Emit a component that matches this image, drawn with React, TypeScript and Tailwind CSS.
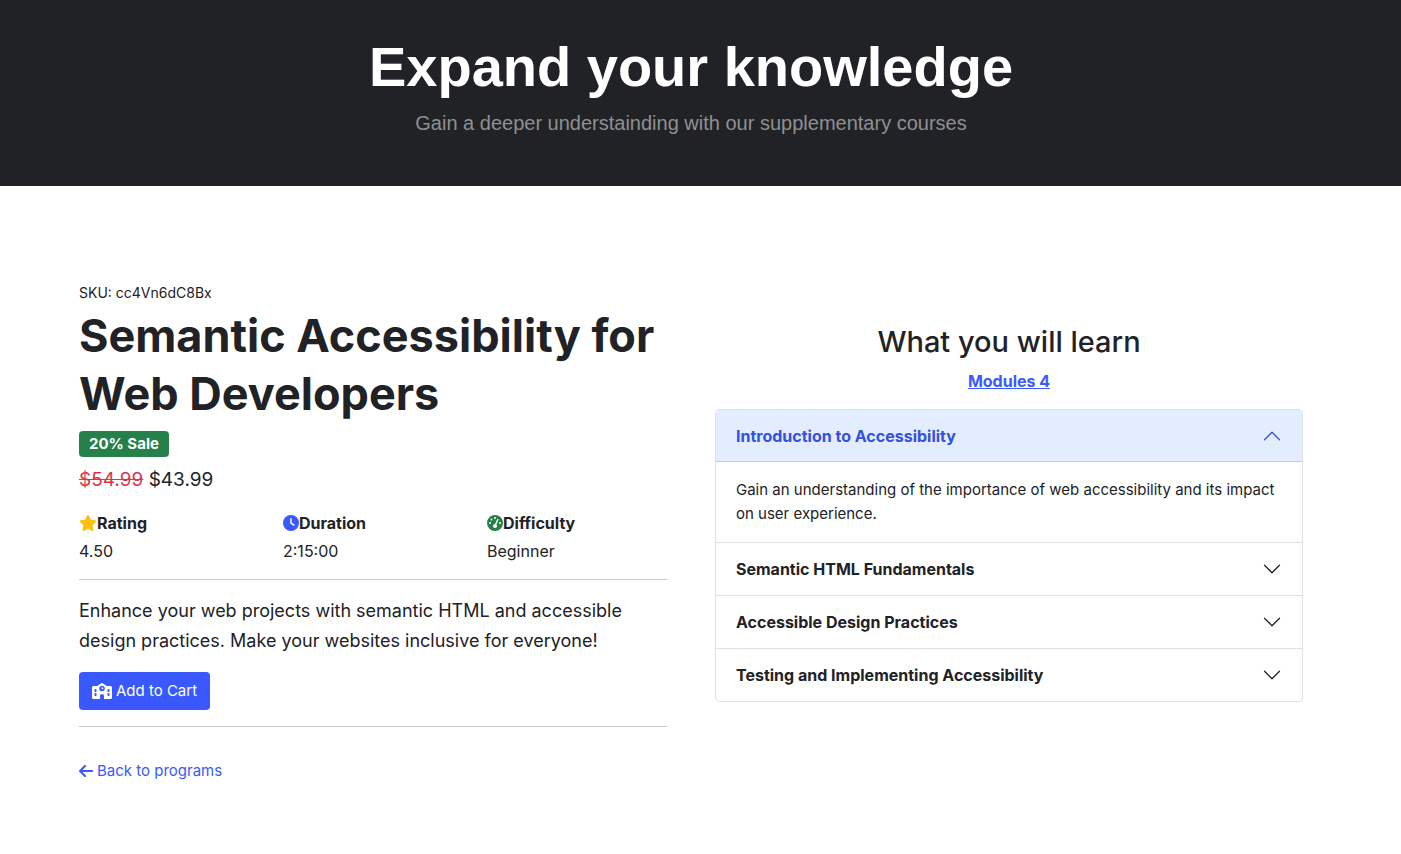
import { useState } from "react";
import { FaArrowLeft, FaClock, FaGaugeHigh, FaSchool, FaStar } from "react-icons/fa6";

const modules = [
  {
    title: "Introduction to Accessibility",
    body: "Gain an understanding of the importance of web accessibility and its impact on user experience.",
  },
  {
    title: "Semantic HTML Fundamentals",
    body: "Learn how to structure pages with meaningful HTML elements.",
  },
  {
    title: "Accessible Design Practices",
    body: "Apply inclusive design principles to layout, colour and interaction.",
  },
  {
    title: "Testing and Implementing Accessibility",
    body: "Test your pages and bring accessibility into your workflow.",
  },
];

const facts = [
  { label: "Rating", value: "4.50", icon: <FaStar className="h-4 w-[18px] text-[#fdbe15]" /> },
  { label: "Duration", value: "2:15:00", icon: <FaClock className="size-4 text-[#3959ff]" /> },
  { label: "Difficulty", value: "Beginner", icon: <FaGaugeHigh className="size-4 text-[#26804a]" /> },
];

function Chevron({ open }: { open: boolean }) {
  return (
    <svg viewBox="0 0 16 16" fill="currentColor" className={open ? "size-5 rotate-180" : "size-5"} aria-hidden="true">
      <path
        fillRule="evenodd"
        d="M1.646 4.646a.5.5 0 0 1 .708 0L8 10.293l5.646-5.647a.5.5 0 0 1 .708.708l-6 6a.5.5 0 0 1-.708 0l-6-6a.5.5 0 0 1 0-.708z"
      />
    </svg>
  );
}

function Accordion() {
  const [active, setActive] = useState(0);
  return (
    <div className="divide-y divide-[#dee2e6] overflow-hidden rounded border border-[#dee2e6]">
      {modules.map((module, index) => {
        const open = index === active;
        return (
          <div key={module.title}>
            <h3>
              <button
                type="button"
                aria-expanded={open}
                aria-controls={`module-${index}`}
                onClick={() => setActive(open ? -1 : index)}
                className={
                  open
                    ? "flex w-full items-center justify-between bg-[#e3edff] px-5 py-[14px] text-left font-bold text-[#3350e0] shadow-[inset_0_-1px_0_#c4cee0]"
                    : "flex w-full items-center justify-between px-5 py-[14px] text-left font-bold"
                }
              >
                {module.title}
                <Chevron open={open} />
              </button>
            </h3>
            {open && (
              <p id={`module-${index}`} className="px-5 py-4 text-[15px] leading-6">
                {module.body}
              </p>
            )}
          </div>
        );
      })}
    </div>
  );
}

export default function App() {
  return (
    <div className="min-h-screen bg-white font-['Inter',sans-serif] text-base text-[#212226]">
      <header className="bg-[#212226] pt-8 pr-[19px] pb-[46px] text-center font-['Liberation_Sans',Arial,sans-serif]">
        <h1 className="text-[56px] leading-[70px] font-bold text-white">Expand your knowledge</h1>
        <p className="mt-1 text-xl leading-[34px] text-[#8f9092]">
          Gain a deeper understainding with our supplementary courses
        </p>
      </header>

      <main className="pt-24 pr-[19px] pb-12">
        <div className="mx-auto max-w-[1224px]">
          <div className="grid grid-cols-2 items-center gap-12">
            <section>
              <p className="text-sm leading-[21px]">SKU: cc4Vn6dC8Bx</p>
              <h2 className="mt-1 text-[45px] leading-[58px] font-bold">Semantic Accessibility for Web Developers</h2>
              <div className="mt-2 flex">
                <span className="rounded bg-[#26804a] px-[10px] py-[3px] text-[15px] leading-5 font-bold text-white">
                  20% Sale
                </span>
              </div>
              <p className="mt-2 text-[19px] leading-[30px]">
                <del className="text-[#dc3545]">$54.99</del> $43.99
              </p>
              <dl className="mt-4 grid grid-cols-3 gap-x-6">
                {facts.map((fact) => (
                  <div key={fact.label}>
                    <dt className="flex items-center font-bold">
                      {fact.icon}
                      {fact.label}
                    </dt>
                    <dd className="mt-1">{fact.value}</dd>
                  </div>
                ))}
              </dl>
              <hr className="my-4 border-[#c7c8c9]" />
              <p className="text-lg leading-[30px]">
                Enhance your web projects with semantic HTML and accessible design practices. Make your websites
                inclusive for everyone!
              </p>
              <button
                type="button"
                className="mt-4 flex h-[38px] items-center gap-1 rounded bg-[#3959ff] px-[13px] text-[15px] text-white"
              >
                <FaSchool className="h-4 w-5" />
                Add to Cart
              </button>
              <hr className="my-4 border-[#c7c8c9]" />
            </section>

            <section>
              <h2 className="text-center text-[29px] leading-[38px] font-medium">What you will learn</h2>
              <p className="mt-2 mb-4 text-center">
                <a href="#modules" className="font-bold text-[#3959ff] underline">
                  Modules 4
                </a>
              </p>
              <Accordion />
            </section>
          </div>
          <a href="#programs" className="mt-4 inline-flex items-center gap-1 text-[15px] leading-6 text-[#3959ff]">
            <FaArrowLeft className="h-4 w-[14px]" />
            Back to programs
          </a>
        </div>
      </main>
    </div>
  );
}
